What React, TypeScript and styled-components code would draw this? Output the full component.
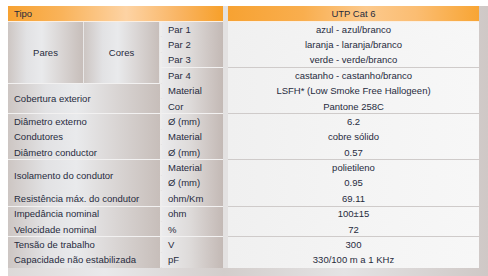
import styled, { createGlobalStyle } from 'styled-components'

const GlobalStyle = createGlobalStyle`
  html, body {
    margin: 0;
    padding: 0;
    background: #ffffff;
  }
  body {
    font-family: 'Liberation Sans', Arial, sans-serif;
    color: #272b3d;
  }
`

const Frame = styled.div`
  box-sizing: border-box;
  margin: 6px 0 0 8px;
  width: 480px;
  height: 270px;
  padding: 0 9px 8px 0;
  background: linear-gradient(90deg, #ddd9d8 0%, #e9e9eb 20%, #d3cdcb 45%, #e4e3e4 70%, #cfc8c6 100%);
`

const Table = styled.div`
  display: grid;
  grid-template-columns: 76px 76px 63px 5px 251px;
  grid-template-rows: 16px repeat(16, 1fr);
  height: 262px;
  background: #e3e1e1;
  font-size: 9.5px;
`

const Header = styled.div<{ $col: string }>`
  grid-column: ${p => p.$col};
  grid-row: 1;
  box-sizing: border-box;
  display: flex;
  align-items: center;
  padding-left: 6px;
  border-bottom: 1px solid #fbefe2;
  background: linear-gradient(90deg, #f7a232 0%, #f9b35a 25%, #fdd3a4 55%, #f9b462 80%, #f7a02a 100%);
`

const HeaderRight = styled(Header)`
  justify-content: center;
  padding-left: 0;
  background: linear-gradient(90deg, #f7a232 0%, #f9ae4e 30%, #fcc98c 55%, #fbbd72 75%, #f8a534 100%);
`

const Label = styled.div<{ $col: string; $row: string; $line?: boolean; $center?: boolean }>`
  grid-column: ${p => p.$col};
  grid-row: ${p => p.$row};
  box-sizing: border-box;
  display: flex;
  align-items: center;
  justify-content: ${p => (p.$center ? 'center' : 'flex-start')};
  padding-left: ${p => (p.$center ? '0' : '6px')};
  border-bottom: 1px solid ${p => (p.$line ? '#f2f1f1' : 'transparent')};
  border-right: ${p => (p.$center ? '1px solid #e9e8e8' : '0')};
  background: linear-gradient(90deg, #cdc6c3 0%, #e2e2e4 25%, #e9eaec 45%, #dad6d5 70%, #c7beba 100%);
  white-space: nowrap;
`

const Unit = styled.div<{ $row: number; $line?: boolean }>`
  grid-column: 3;
  grid-row: ${p => p.$row};
  box-sizing: border-box;
  display: flex;
  align-items: center;
  padding-left: 6px;
  border-left: 2px solid #eeeded;
  border-bottom: 1px solid ${p => (p.$line ? '#f2f1f1' : 'transparent')};
  background: linear-gradient(90deg, #ebebed 0%, #dedbda 45%, #cdc5c2 80%, #c3b9b5 100%);
`

const Value = styled.div<{ $row: number; $line?: boolean }>`
  grid-column: 5;
  grid-row: ${p => p.$row};
  box-sizing: border-box;
  display: flex;
  align-items: center;
  justify-content: center;
  border-bottom: 1px solid ${p => (p.$line ? '#cfcbca' : 'transparent')};
  background: linear-gradient(90deg, #f0f0f0 0%, #f4f4f4 50%, #f7f7f7 100%);
`

type Row = { unit: string; value: string; line?: boolean }

const rows: Row[] = [
  { unit: 'Par 1', value: 'azul - azul/branco' },
  { unit: 'Par 2', value: 'laranja - laranja/branco' },
  { unit: 'Par 3', value: 'verde - verde/branco', line: true },
  { unit: 'Par 4', value: 'castanho - castanho/branco' },
  { unit: 'Material', value: 'LSFH* (Low Smoke Free Hallogeen)' },
  { unit: 'Cor', value: 'Pantone 258C', line: true },
  { unit: 'Ø (mm)', value: '6.2' },
  { unit: 'Material', value: 'cobre sólido' },
  { unit: 'Ø (mm)', value: '0.57', line: true },
  { unit: 'Material', value: 'polietileno' },
  { unit: 'Ø (mm)', value: '0.95' },
  { unit: 'ohm/Km', value: '69.11', line: true },
  { unit: 'ohm', value: '100±15' },
  { unit: '%', value: '72', line: true },
  { unit: 'V', value: '300' },
  { unit: 'pF', value: '330/100 m a 1 KHz' },
]

type Lbl = { text: string; col: string; row: string; line?: boolean; center?: boolean }

const labels: Lbl[] = [
  { text: 'Pares', col: '1', row: '2 / 6', center: true, line: true },
  { text: 'Cores', col: '2', row: '2 / 6', center: true, line: true },
  { text: 'Cobertura exterior', col: '1 / 3', row: '6 / 8', line: true },
  { text: 'Diâmetro externo', col: '1 / 3', row: '8' },
  { text: 'Condutores', col: '1 / 3', row: '9' },
  { text: 'Diâmetro conductor', col: '1 / 3', row: '10', line: true },
  { text: 'Isolamento do condutor', col: '1 / 3', row: '11 / 13' },
  { text: 'Resistência máx. do condutor', col: '1 / 3', row: '13', line: true },
  { text: 'Impedância nominal', col: '1 / 3', row: '14' },
  { text: 'Velocidade nominal', col: '1 / 3', row: '15', line: true },
  { text: 'Tensão de trabalho', col: '1 / 3', row: '16' },
  { text: 'Capacidade não estabilizada', col: '1 / 3', row: '17' },
]

export default function App() {
  return (
    <>
      <GlobalStyle />
      <Frame>
        <Table>
          <Header $col="1 / 4">Tipo</Header>
          <HeaderRight $col="5">UTP Cat 6</HeaderRight>

          {labels.map(l => (
            <Label key={l.text} $col={l.col} $row={l.row} $line={l.line} $center={l.center}>
              {l.text}
            </Label>
          ))}

          {rows.map((r, i) => (
            <Unit key={'u' + i} $row={i + 2} $line={r.line}>{r.unit}</Unit>
          ))}
          {rows.map((r, i) => (
            <Value key={'v' + i} $row={i + 2} $line={r.line}>{r.value}</Value>
          ))}
        </Table>
      </Frame>
    </>
  )
}
